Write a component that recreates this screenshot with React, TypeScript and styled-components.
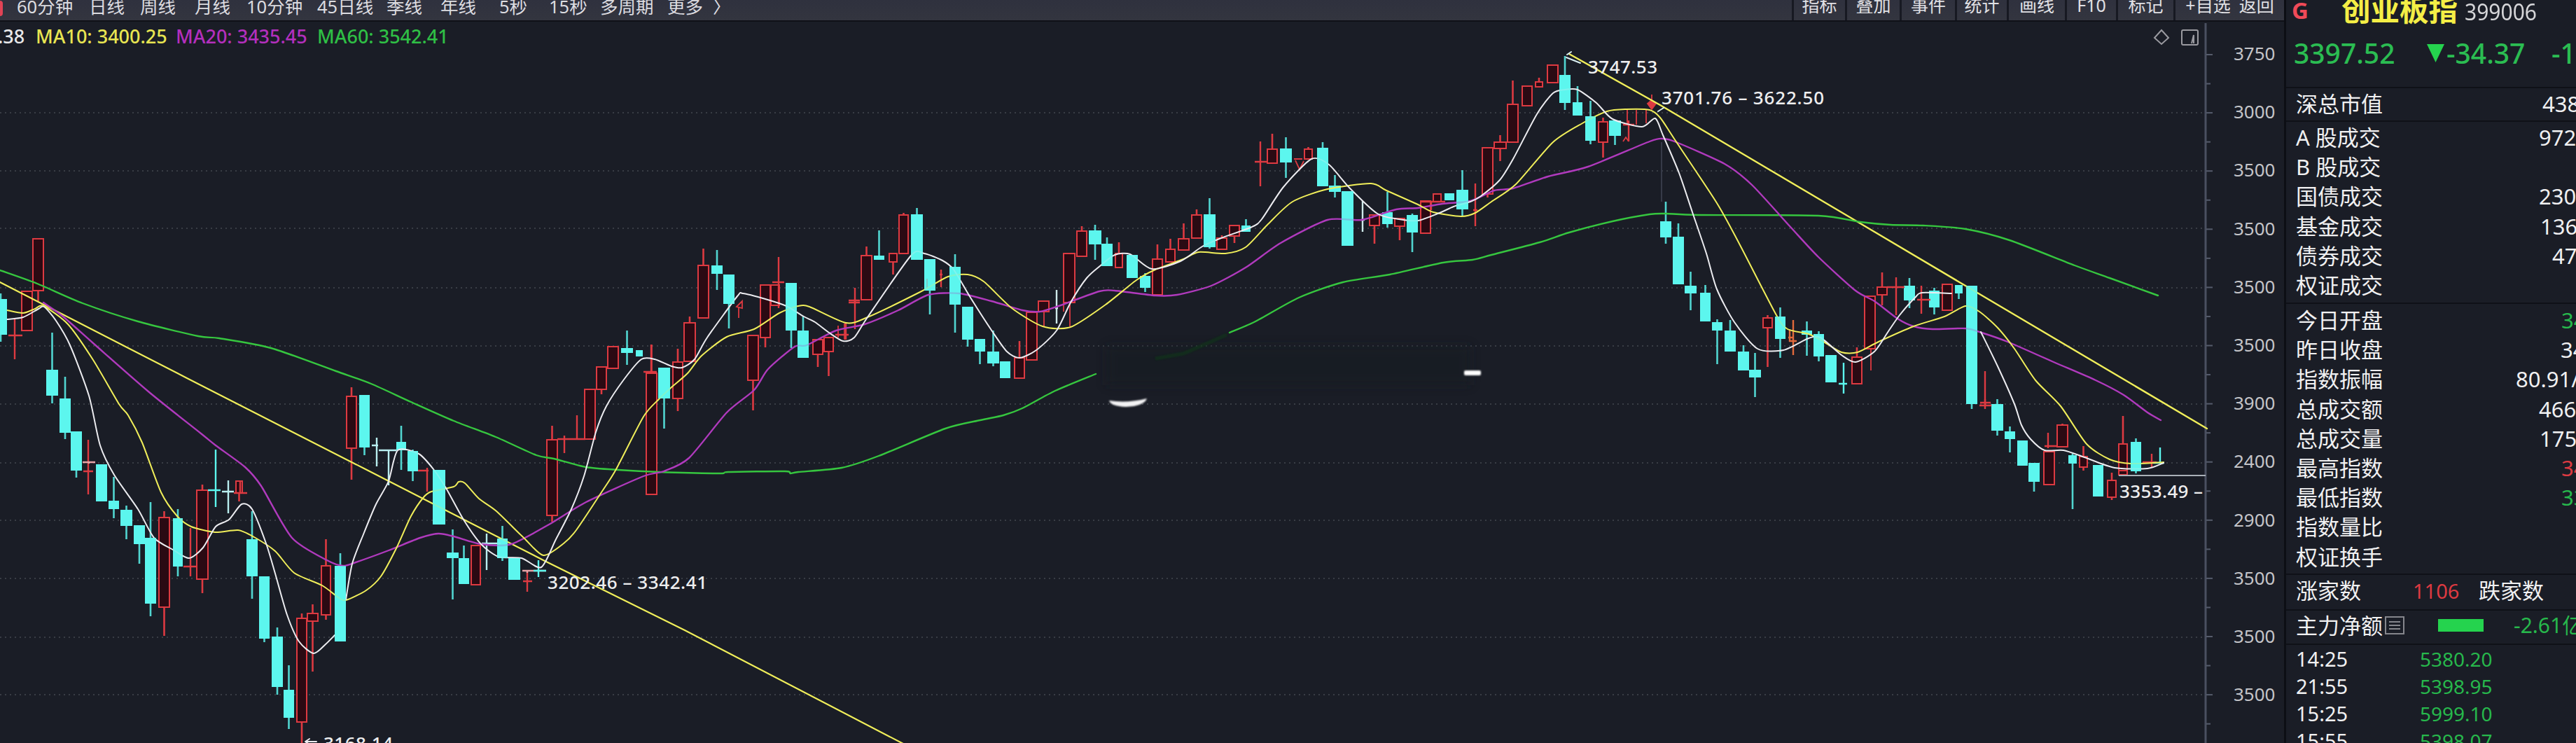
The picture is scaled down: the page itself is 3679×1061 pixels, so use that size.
import React from "react";
import styled, { createGlobalStyle } from "styled-components";

const UI_FONT = `"Noto Sans", "Noto Sans CJK SC", sans-serif`;

const GREEN = "#27b84c";
const RED = "#dd3a41";
const CYAN = "#5cf6ee";
const YELLOW = "#f0ee5a";

const Global = createGlobalStyle`
  html, body { margin: 0; padding: 0; background: #1a1d26; }
  * { box-sizing: border-box; }
`;

const Page = styled.div`
  display: flex;
  width: 3679px;
  height: 1061px;
  overflow: hidden;
  background: #1a1d26;
  color: #f0f0f1;
  font-family: ${UI_FONT};
  white-space: nowrap;
`;

const Main = styled.main`
  flex: none;
  width: 3262px;
  height: 1061px;
  display: flex;
  flex-direction: column;
`;

const Toolbar = styled.header`
  height: 31px;
  display: flex;
  justify-content: space-between;
  overflow: hidden;
  background: linear-gradient(#2f313e, #33353f);
  border-bottom: 2px solid #0f1118;
`;

const Periods = styled.nav`
  display: grid;
  grid-template-columns: 10px 14px 103px 73px 78px 74px 101px 99px 77px 84px 71px 73px 96px 65px 40px;
  align-items: center;
`;

const ActiveDot = styled.span`
  width: 4px;
  height: 22px;
  margin-top: -6px;
  border-radius: 0 8px 8px 0;
  background: #e04355;
`;

const Period = styled.span`
  color: #dcdce0;
  font-size: 25.500px;
  line-height: 30px;
  height: 30px;
  margin-top: -12px;
`;

const Tools = styled.div`
  display: grid;
  grid-template-columns: 76px 78px 79px 74px 83px 73px 82px 158px;
`;

const Tool = styled.div`
  display: flex;
  justify-content: center;
  gap: 12px;
  height: 36px;
  margin-top: -7px;
  border-left: 3px solid #171922;
  color: #e0e0e4;
  font-size: 25px;
  line-height: 29px;
`;

const Body = styled.section`
  position: relative;
  flex: 1;
  display: flex;
`;

const Chart = styled.svg`
  display: block;
  width: 3166px;
  height: 1030px;
  flex: none;
`;

const Legend = styled.div`
  position: absolute;
  left: -3px;
  top: 1px;
  display: flex;
  font-size: 27px;
  font-weight: 500;
  line-height: 40px;
`;

const LegendItem = styled.span<{ $color: string; $width: number }>`
  flex: none;
  color: ${(p) => p.$color};
  width: ${(p) => p.$width}px;
`;

const Scale = styled.aside`
  flex: 1;
  display: flex;
  flex-direction: column;
  padding: 4px 0 0 24px;
`;

const ScaleLabel = styled.span`
  flex: none;
  height: 83.2px;
  color: #c4c4c8;
  font-size: 26px;
  line-height: 83.2px;
`;

const ScaleInner = styled.div`
  display: flex;
  flex-direction: column;
  height: 1000px;
`;

const Sidebar = styled.aside`
  flex: none;
  width: 417px;
  height: 1061px;
  border-left: 3px solid #0c0e14;
  overflow: hidden;
`;

const Title = styled.div`
  display: flex;
  height: 36px;
  padding-left: 8px;
  align-items: center;
`;

const Badge = styled.span`
  flex: none;
  width: 71px;
  color: #ef4a58;
  font-size: 33px;
  font-weight: 700;
  line-height: 30px;
  margin-top: -7px;
`;

const Name = styled.span`
  flex: none;
  width: 176px;
  color: #f4ee46;
  font-family: "Noto Sans CJK SC", sans-serif;
  font-size: 41.500px;
  font-weight: 700;
  line-height: 40px;
  margin-top: -12px;
`;

const Code = styled.span`
  color: #d5d5d8;
  font-size: 30px;
  line-height: 30px;
  margin-top: -2px;
  transform: scaleY(1.1);
`;

const Quote = styled.div`
  display: flex;
  align-items: center;
  height: 88px;
  padding: 0 0 9px 11px;
  color: #2bbd52;
  font-size: 39px;
  font-weight: 500;
`;

const Price = styled.span`
  flex: none;
  width: 190px;
`;

const DownMark = styled.svg`
  flex: none;
  width: 25px;
  height: 26px;
  margin-right: 3px;
`;

const Change = styled.span`
  flex: none;
  width: 150px;
`;

const Group = styled.div<{ $h: number; $pad: number }>`
  height: ${(p) => p.$h}px;
  padding-top: ${(p) => p.$pad}px;
  border-top: 2px solid #0f1117;
`;

const Row = styled.div<{ $h: number }>`
  display: flex;
  align-items: center;
  height: ${(p) => p.$h}px;
  padding-left: 14px;
  font-size: 31px;
  line-height: 42px;
`;

const Label = styled.span<{ $w: number }>`
  flex: none;
  width: ${(p) => p.$w}px;
`;

const Value = styled.span<{ $color?: string; $size?: number }>`
  flex: none;
  color: ${(p) => p.$color || "inherit"};
  font-size: ${(p) => p.$size || 31}px;
`;

const Flow = styled.span`
  flex: none;
  width: 65px;
  height: 18px;
  margin: 0 43px 0 48px;
  background: #25d34e;
`;

const ListIcon = styled.svg`
  width: 28px;
  height: 26px;
  flex: none;
`;

/* up: hollow red, down: solid cyan — [kind, x1, x2, top, bottom, high, low] */
type Candle = [string, number, number, number, number, number, number];

const candles: Candle[] = [
  ["d", -8, 10, 427, 478, 419, 488],
  ["u", 31, 46, 416, 472, 416, 472],
  ["u", 47, 62, 341, 415, 341, 430],
  ["d", 66, 83, 528, 565, 475, 576],
  ["d", 85, 101, 569, 618, 538, 627],
  ["d", 101, 117, 616, 672, 616, 682],
  ["d", 137, 153, 663, 716, 663, 716],
  ["d", 155, 170, 715, 727, 681, 740],
  ["d", 172, 189, 728, 751, 722, 770],
  ["d", 191, 207, 750, 777, 750, 805],
  ["d", 207, 223, 768, 862, 717, 880],
  ["u", 227, 242, 739, 867, 730, 908],
  ["d", 247, 261, 740, 809, 727, 823],
  ["u", 281, 297, 700, 827, 692, 847],
  ["u", 337, 346, 687, 704, 687, 716],
  ["d", 352, 368, 770, 823, 730, 855],
  ["d", 370, 385, 823, 912, 823, 917],
  ["d", 388, 404, 909, 981, 896, 992],
  ["d", 405, 420, 985, 1025, 950, 1041],
  ["u", 424, 438, 883, 1031, 876, 1061],
  ["u", 439, 454, 876, 887, 863, 959],
  ["u", 459, 472, 808, 878, 770, 885],
  ["d", 478, 494, 808, 916, 790, 916],
  ["u", 495, 509, 566, 640, 553, 685],
  ["d", 513, 528, 564, 639, 564, 650],
  ["d", 566, 580, 631, 643, 608, 671],
  ["d", 582, 597, 644, 673, 642, 687],
  ["d", 618, 636, 671, 749, 671, 749],
  ["d", 638, 655, 789, 797, 756, 856],
  ["d", 655, 670, 797, 834, 779, 834],
  ["u", 673, 686, 779, 835, 779, 835],
  ["d", 710, 725, 769, 797, 751, 801],
  ["d", 726, 743, 797, 828, 797, 828],
  ["u", 781, 796, 628, 736, 608, 745],
  ["u", 835, 850, 556, 627, 556, 627],
  ["u", 852, 866, 524, 556, 524, 563],
  ["u", 868, 883, 495, 526, 495, 526],
  ["d", 887, 904, 497, 504, 472, 521],
  ["d", 908, 918, 500, 509, 500, 509],
  ["u", 923, 938, 533, 706, 492, 706],
  ["d", 940, 957, 525, 569, 525, 612],
  ["u", 961, 975, 517, 569, 498, 587],
  ["u", 977, 993, 461, 516, 452, 516],
  ["u", 997, 1012, 379, 454, 355, 454],
  ["d", 1016, 1032, 379, 391, 357, 414],
  ["d", 1033, 1049, 392, 434, 392, 469],
  ["u", 1068, 1083, 479, 543, 479, 586],
  ["u", 1086, 1100, 407, 482, 407, 496],
  ["u", 1101, 1113, 407, 436, 407, 436],
  ["d", 1122, 1138, 404, 472, 404, 497],
  ["d", 1139, 1155, 472, 511, 452, 511],
  ["u", 1161, 1175, 485, 506, 485, 524],
  ["u", 1177, 1190, 482, 502, 482, 537],
  ["u", 1230, 1245, 365, 428, 352, 428],
  ["d", 1248, 1263, 365, 371, 329, 371],
  ["u", 1270, 1281, 362, 374, 362, 392],
  ["u", 1284, 1297, 307, 362, 304, 362],
  ["d", 1301, 1318, 306, 371, 297, 371],
  ["d", 1320, 1336, 370, 415, 370, 449],
  ["d", 1356, 1372, 381, 435, 363, 475],
  ["d", 1374, 1390, 438, 485, 438, 495],
  ["d", 1392, 1407, 484, 502, 484, 520],
  ["d", 1410, 1427, 502, 519, 472, 523],
  ["d", 1428, 1443, 516, 540, 516, 540],
  ["u", 1449, 1463, 511, 540, 487, 540],
  ["u", 1466, 1481, 446, 514, 446, 514],
  ["u", 1483, 1498, 430, 445, 430, 445],
  ["u", 1519, 1535, 362, 432, 362, 432],
  ["u", 1538, 1552, 330, 366, 323, 366],
  ["d", 1555, 1573, 329, 349, 321, 371],
  ["d", 1573, 1589, 348, 380, 339, 380],
  ["u", 1593, 1603, 362, 382, 346, 382],
  ["d", 1609, 1625, 364, 397, 364, 397],
  ["d", 1628, 1643, 394, 411, 390, 417],
  ["u", 1646, 1660, 370, 421, 349, 421],
  ["u", 1665, 1678, 356, 374, 341, 374],
  ["u", 1683, 1698, 341, 357, 319, 357],
  ["u", 1702, 1716, 307, 340, 299, 340],
  ["d", 1719, 1736, 306, 353, 283, 355],
  ["u", 1738, 1752, 340, 356, 336, 356],
  ["u", 1756, 1770, 322, 337, 322, 347],
  ["d", 1773, 1786, 322, 331, 313, 331],
  ["u", 1810, 1824, 213, 233, 191, 233],
  ["d", 1828, 1845, 212, 232, 196, 254],
  ["u", 1863, 1874, 213, 227, 210, 227],
  ["d", 1881, 1897, 211, 266, 203, 266],
  ["d", 1898, 1915, 265, 274, 250, 282],
  ["d", 1916, 1933, 273, 351, 273, 351],
  ["u", 1956, 1970, 307, 322, 307, 348],
  ["d", 1974, 1989, 303, 320, 274, 325],
  ["u", 1992, 2006, 312, 323, 312, 343],
  ["d", 2009, 2025, 307, 332, 305, 360],
  ["u", 2029, 2043, 287, 333, 287, 333],
  ["u", 2047, 2058, 277, 288, 277, 288],
  ["d", 2063, 2077, 276, 286, 276, 286],
  ["d", 2080, 2097, 271, 299, 243, 309],
  ["u", 2117, 2132, 211, 277, 211, 282],
  ["u", 2134, 2151, 203, 212, 193, 230],
  ["u", 2153, 2168, 149, 203, 115, 203],
  ["u", 2174, 2188, 123, 151, 123, 151],
  ["u", 2193, 2203, 117, 124, 111, 124],
  ["u", 2210, 2225, 93, 118, 93, 118],
  ["d", 2227, 2243, 107, 147, 80, 157],
  ["d", 2246, 2260, 146, 165, 123, 165],
  ["d", 2264, 2279, 166, 201, 144, 206],
  ["u", 2283, 2296, 174, 203, 168, 225],
  ["d", 2298, 2315, 172, 194, 172, 207],
  ["d", 2371, 2387, 316, 339, 288, 348],
  ["d", 2389, 2405, 338, 406, 319, 406],
  ["d", 2406, 2423, 408, 419, 388, 443],
  ["d", 2428, 2443, 418, 459, 407, 459],
  ["d", 2445, 2460, 460, 472, 456, 520],
  ["d", 2463, 2479, 472, 502, 457, 502],
  ["d", 2482, 2498, 502, 529, 493, 529],
  ["d", 2498, 2515, 528, 539, 504, 567],
  ["u", 2518, 2531, 454, 468, 450, 524],
  ["d", 2535, 2550, 452, 484, 439, 511],
  ["d", 2573, 2588, 472, 478, 459, 508],
  ["d", 2590, 2605, 477, 509, 473, 516],
  ["d", 2607, 2623, 507, 546, 507, 546],
  ["u", 2645, 2659, 510, 548, 496, 548],
  ["u", 2663, 2678, 423, 498, 423, 498],
  ["u", 2681, 2695, 410, 421, 389, 436],
  ["d", 2719, 2735, 408, 429, 397, 440],
  ["d", 2755, 2770, 415, 439, 411, 449],
  ["u", 2774, 2788, 406, 443, 406, 443],
  ["d", 2792, 2803, 407, 419, 407, 427],
  ["d", 2808, 2824, 408, 577, 408, 584],
  ["d", 2844, 2861, 577, 615, 570, 622],
  ["d", 2863, 2878, 616, 627, 609, 646],
  ["d", 2881, 2896, 629, 665, 629, 665],
  ["d", 2897, 2913, 661, 688, 661, 702],
  ["u", 2919, 2934, 645, 692, 645, 692],
  ["u", 2938, 2953, 607, 638, 605, 638],
  ["d", 2954, 2966, 650, 662, 648, 727],
  ["u", 2970, 2981, 652, 667, 637, 672],
  ["d", 2989, 3004, 664, 709, 664, 709],
  ["u", 3010, 3022, 686, 710, 675, 714],
  ["u", 3026, 3038, 634, 678, 594, 680],
  ["d", 3043, 3058, 631, 673, 626, 676],
];

/* doji bars — [colour, centre, high, low, bar y, bar x1, bar x2] */
type Doji = [string, number, number, number, number, number, number];

const dojis: Doji[] = [
  [RED, 21, 455, 513, 479, 12, 32],
  [RED, 126, 628, 706, 673, 119, 133],
  ["#e7a3a6", 127, 659, 662, 660, 118, 136],
  [RED, 272, 754, 823, 809, 262, 281],
  [CYAN, 308, 642, 724, 700, 297, 315],
  ["#b9eef0", 326, 686, 733, 702, 317, 334],
  [RED, 343, 688, 704, 704, 334, 353],
  ["#b9eef0", 538, 625, 666, 636, 531, 540],
  ["#b9eef0", 555, 643, 693, 643, 541, 566],
  [RED, 610, 668, 702, 672, 597, 612],
  ["#b9eef0", 695, 762, 814, 776, 688, 715],
  [RED, 753, 815, 845, 830, 747, 760],
  ["#e7a3a6", 753, 814, 818, 815, 746, 780],
  [CYAN, 769, 800, 824, 815, 762, 780],
  [RED, 806, 622, 647, 627, 796, 818],
  [RED, 824, 593, 627, 627, 818, 836],
  [RED, 930, 492, 532, 531, 919, 938],
  [RED, 1112, 367, 440, 403, 1103, 1120],
  [RED, 1221, 411, 470, 429, 1212, 1228],
  [RED, 1221, 427, 434, 432, 1212, 1228],
  [RED, 1208, 460, 485, 478, 1193, 1212],
  [RED, 1344, 385, 410, 392, 1342, 1346],
  ["#cfe9ea", 1509, 414, 462, 440, 1507, 1511],
  [RED, 1800, 202, 266, 231, 1792, 1809],
  ["#cfe9ea", 1946, 287, 331, 314, 1944, 1949],
  [RED, 2044, 288, 300, 288, 2029, 2064],
  [RED, 2107, 262, 323, 300, 2104, 2110],
  [RED, 2326, 172, 202, 178, 2318, 2334],
  ["#e26a3b", 2561, 457, 507, 487, 2555, 2566],
  ["#e26a3b", 2556, 470, 488, 482, 2554, 2560],
  [CYAN, 2633, 518, 562, 548, 2626, 2638],
  [RED, 2708, 396, 450, 410, 2695, 2720],
  [RED, 2744, 408, 448, 428, 2738, 2757],
  [RED, 2835, 530, 584, 579, 2827, 2845],
  [RED, 2835, 570, 580, 575, 2828, 2843],
  [RED, 2925, 618, 640, 637, 2920, 2937],
  [RED, 3073, 648, 668, 660, 3060, 3080],
  [CYAN, 3085, 639, 661, 661, 3075, 3091],
];

type Pt = [number, number];

const green1: Pt[] = [[0, 386], [53, 405], [118, 433], [197, 459], [283, 480], [313, 483], [387, 497], [480, 530], [530, 548], [587, 574], [648, 601], [708, 624], [766, 650], [791, 655], [837, 667], [883, 671], [941, 674], [1028, 676], [1040, 674], [1121, 673], [1129, 676], [1140, 674], [1202, 668], [1255, 651], [1350, 612], [1400, 600], [1433, 593], [1460, 583], [1507, 558], [1565, 534]];
const green2: Pt[] = [[1756, 475], [1793, 459], [1855, 425], [1918, 403], [1985, 392], [2061, 375], [2103, 371], [2130, 364], [2199, 346], [2241, 332], [2303, 316], [2356, 306], [2379, 305], [2425, 307], [2597, 308], [2657, 317], [2700, 321], [2747, 322], [2807, 327], [2870, 343], [2963, 379], [3013, 397], [3082, 422]];
const purple: Pt[] = [[62, 432], [90, 452], [133, 490], [213, 560], [287, 619], [308, 636], [350, 667], [373, 694], [417, 768], [467, 800], [490, 808], [508, 803], [555, 786], [600, 768], [626, 762], [648, 766], [687, 777], [730, 777], [784, 749], [837, 717], [919, 680], [948, 673], [984, 654], [1038, 589], [1077, 557], [1097, 527], [1135, 495], [1152, 493], [1194, 472], [1235, 463], [1283, 443], [1326, 421], [1370, 419], [1416, 430], [1460, 443], [1485, 445], [1512, 437], [1570, 416], [1592, 415], [1650, 422], [1681, 421], [1730, 408], [1779, 382], [1829, 347], [1896, 314], [1945, 314], [1994, 299], [2025, 297], [2060, 291], [2100, 287], [2134, 272], [2161, 269], [2211, 252], [2268, 238], [2356, 202], [2375, 198], [2394, 203], [2463, 234], [2502, 264], [2557, 324], [2597, 367], [2650, 415], [2677, 430], [2710, 455], [2733, 466], [2760, 470], [2807, 469], [2830, 475], [2867, 488], [2933, 517], [2993, 543], [3033, 564], [3067, 589], [3086, 600]];
const yellow1: Pt[] = [[10, 443], [33, 447], [50, 441], [62, 437], [97, 463], [133, 514], [170, 577], [183, 593], [203, 632], [230, 703], [253, 737], [273, 752], [307, 760], [340, 757], [363, 767], [393, 787], [420, 818], [460, 836], [483, 853], [494, 857], [523, 843], [544, 823], [566, 783], [587, 737], [605, 710], [616, 702], [648, 695], [655, 688], [664, 690], [684, 712], [709, 730], [748, 768], [776, 793], [805, 776], [823, 757], [859, 703], [880, 670], [919, 595], [941, 570], [959, 553], [982, 533], [1002, 508], [1038, 481], [1077, 470], [1113, 447], [1140, 437], [1156, 438], [1208, 461], [1239, 453], [1314, 417], [1354, 395], [1382, 392], [1405, 402], [1445, 440], [1489, 466], [1529, 467], [1579, 435], [1623, 400], [1650, 385], [1690, 370], [1712, 360], [1750, 362], [1779, 353], [1811, 320], [1846, 288], [1896, 270], [1958, 262], [1980, 272], [2025, 292], [2047, 303], [2087, 309], [2107, 304], [2130, 288], [2165, 263], [2218, 203], [2260, 176], [2295, 159], [2322, 156], [2356, 157], [2371, 168], [2391, 198], [2452, 290], [2484, 348], [2537, 450], [2553, 470], [2583, 477], [2603, 487], [2630, 503], [2653, 503], [2683, 488], [2733, 466], [2777, 452], [2807, 437], [2827, 445], [2853, 468], [2877, 498], [2907, 543], [2943, 580], [2980, 634], [3013, 656], [3043, 662], [3090, 660]];
const white: Pt[] = [[10, 456], [33, 453], [55, 441], [63, 438], [80, 458], [100, 493], [127, 565], [143, 636], [163, 678], [197, 727], [220, 768], [247, 785], [270, 797], [290, 782], [308, 752], [327, 742], [345, 720], [360, 727], [380, 776], [393, 819], [410, 878], [427, 916], [448, 933], [465, 920], [478, 907]];
const white2: Pt[] = [[494, 856], [503, 805], [519, 763], [537, 720], [555, 687], [568, 643], [598, 648], [619, 670], [637, 697], [662, 742], [687, 777], [712, 795], [745, 797], [773, 810], [794, 770], [816, 727], [834, 680], [851, 617], [866, 580], [891, 542], [916, 513], [935, 513], [959, 523], [974, 525], [992, 513], [1010, 482], [1053, 423], [1061, 419], [1093, 427], [1123, 437], [1148, 452], [1164, 460], [1184, 475], [1204, 487], [1220, 482], [1239, 453], [1301, 365], [1320, 362], [1346, 372], [1362, 385], [1386, 425], [1417, 473], [1438, 502], [1456, 511], [1480, 500], [1509, 472], [1529, 432], [1552, 397], [1572, 379], [1592, 364], [1614, 363], [1645, 384], [1686, 373], [1717, 352], [1744, 340], [1788, 324], [1802, 313], [1833, 267], [1873, 227], [1898, 235], [1927, 268], [1967, 305], [1998, 313], [2025, 315], [2056, 304], [2076, 295], [2100, 288], [2115, 280], [2142, 257], [2161, 227], [2195, 163], [2218, 133], [2235, 128], [2253, 128], [2280, 147], [2303, 170], [2345, 181], [2364, 169], [2375, 193], [2398, 247], [2417, 303], [2437, 362], [2452, 413], [2477, 460], [2510, 498], [2547, 500], [2583, 483], [2600, 482], [2630, 507], [2650, 517], [2677, 502], [2697, 473], [2713, 450], [2735, 425], [2745, 418], [2787, 419]];
const white3: Pt[] = [[2829, 474], [2853, 523], [2877, 577], [2887, 607], [2900, 627], [2920, 643], [2947, 643], [2977, 653], [3020, 668], [3067, 669], [3090, 661]];

const curve = (p: Pt[]) => {
  let d = `M${p[0][0]} ${p[0][1]}`;
  for (let i = 0; i < p.length - 1; i++) {
    const a = p[Math.max(0, i - 1)];
    const b = p[i];
    const c = p[i + 1];
    const e = p[Math.min(p.length - 1, i + 2)];
    const k = 8;
    d += `C${b[0] + (c[0] - a[0]) / k} ${b[1] + (c[1] - a[1]) / k} ${c[0] - (e[0] - b[0]) / k} ${c[1] - (e[1] - b[1]) / k} ${c[0]} ${c[1]}`;
  }
  return d;
};

const gridY = [161, 244, 326, 411, 494, 577, 661, 743, 826, 910, 992];
const scale = ["3750", "3000", "3500", "3500", "3500", "3500", "3900", "2400", "2900", "3500", "3500", "3500"];

const CandleMark = ({ c }: { c: Candle }) => {
  const [kind, x1, x2, top, bottom, high, low] = c;
  const mid = (x1 + x2) / 2;
  if (kind === "d") {
    return (
      <g fill={CYAN}>
        <rect x={mid - 1.3} y={high} width={2.6} height={low - high} opacity={0.85} />
        <rect x={x1} y={top} width={x2 - x1} height={bottom - top} />
      </g>
    );
  }
  return (
    <g stroke={RED} strokeWidth={2} fill="#2b0a13">
      <path d={`M${mid} ${high}V${top}M${mid} ${bottom}V${low}`} strokeWidth={2.6} />
      <rect x={x1} y={top} width={x2 - x1} height={bottom - top} />
    </g>
  );
};

const DojiMark = ({ d }: { d: Doji }) => (
  <path d={`M${d[1]} ${d[2]}V${d[3]}M${d[5]} ${d[4]}H${d[6]}`} stroke={d[0]} strokeWidth={2.4} fill="none" />
);

const PriceChart = () => (
  <Chart viewBox="0 31 3166 1030">
    <defs>
      <filter id="soft" x="-20%" y="-50%" width="140%" height="200%">
        <feGaussianBlur stdDeviation="7" />
      </filter>
      <filter id="edge" x="-20%" y="-50%" width="140%" height="200%">
        <feGaussianBlur stdDeviation="1" />
      </filter>
    </defs>
    <g stroke="#393d45" strokeWidth={2} strokeDasharray="2 5">
      {gridY.map((y) => (
        <path key={y} d={`M0 ${y}H3150`} />
      ))}
    </g>
    <path d="M2373 203V288" stroke="#363a48" strokeWidth={2} />
    <g stroke="#555b6b" strokeWidth={2} fill="none">
      <path d="M3150 33V1061" strokeWidth={3} stroke="#4a5060" />
      {Array.from({ length: 24 }, (_, i) => (
        <path key={i} d={`M3151 ${78 + i * 41.55}h${i % 2 ? 6 : 9}`} />
      ))}
    </g>

    {candles.map((c, i) => (
      <CandleMark key={i} c={c} />
    ))}
    {dojis.map((d, i) => (
      <DojiMark key={i} d={d} />
    ))}
    <g stroke={RED} strokeWidth={1.8} fill="none">
      <path d="M1491 445V467M1528 432V466M1519 432V445M1052 438l8 -8v10zM1055 438V454" />
      <path d="M1848 227h12M1850 229l6 13l6-12M2672 498V529M2324 157V178M2337 157V178M2351 157V176M2318 202l4 -6l4 6" />
      <path d="M1197 482V465M1206 485V462M3026 672H3038M1324 412V398" />
      <path d="M2359 135V143M2353 148l6-5l6 5l-6 8z" fill={RED} />
    </g>
    <g fill="none" strokeWidth={2.4} strokeLinejoin="round" strokeLinecap="round">
      <path d="M0 403L267 540L520 669L776 800L978 900L1290 1062" stroke={YELLOW} strokeWidth={2.2} />
      <path d="M2241 77L2371 150L2650 315L2807 408L3152 612" stroke={YELLOW} />
      <path d={curve(green1)} stroke="#36c63f" />
      <path d={curve(green2)} stroke="#36c63f" />
      <path d={curve(purple)} stroke="#b03abd" />
      <path d={curve(yellow1)} stroke={YELLOW} strokeWidth={2} />
      <path d={curve(white)} stroke="#ececf0" strokeWidth={2} />
      <path d={curve(white2)} stroke="#ececf0" strokeWidth={2} />
      <path d={curve(white3)} stroke="#ececf0" strokeWidth={2} />
      <path d="M2237 82l20 8M2238 78l6-4M2368 159l8-5" stroke="#d9eef0" strokeWidth={2} />
      <path d="M436 1059h16M436 1059l6-4M436 1059l6 4" stroke="#ececf0" strokeWidth={2} />
    </g>
    {candles
      .filter((c) => c[0] === "d" && c[4] - c[3] > 24)
      .map((c, i) => (
        <rect key={i} x={c[1]} y={c[3]} width={c[2] - c[1]} height={c[4] - c[3]} fill={CYAN} opacity={0.75} />
      ))}
    <path d="M3026 679H3150" stroke="#aab0b8" strokeWidth={2} />

    <rect x={1580} y={494} width={520} height={56} fill="#171a21" opacity={0.5} filter="url(#soft)" />
    <path d="M1650 512L1690 505L1752 478" stroke="#0b3a14" strokeWidth={5} opacity={0.55} fill="none" filter="url(#edge)" />
    <path d="M1584 572Q1610 576 1638 569Q1634 580 1608 581Q1586 580 1584 572Z" fill="#f3f3f4" filter="url(#edge)" />
    <rect x={2091} y={529} width={24} height={7} rx={2} fill="#ffffff" filter="url(#edge)" />

    <g fill="#eeeeef" fontFamily={UI_FONT} fontSize={26} fontWeight={500}>
      <text x={2268} y={105} textLength={99}>3747.53</text>
      <text x={2373} y={149} textLength={232}>3701.76 – 3622.50</text>
      <text x={782} y={841} textLength={228}>3202.46 – 3342.41</text>
      <text x={3027} y={711} textLength={119}>3353.49 –</text>
      <text x={462} y={1071} textLength={99}>3168.14</text>
    </g>
    <g fill="none" stroke="#9a9aa0" strokeWidth={2}>
      <path d="M3087 43L3097 54L3087 63L3077 54Z" />
      <rect x={3116} y={43} width={23} height={21} rx={2} />
      <path d="M3133 62V50l-3 12" />
    </g>
  </Chart>
);

const periods = ["60分钟", "日线", "周线", "月线", "10分钟", "45日线", "季线", "年线", "5秒", "15秒", "多周期", "更多", "〉"];
const tools = ["指标", "叠加", "事件", "统计", "画线", "F10", "标记"];

type Stat = [string, string, number, string?];
const turnover: Stat[] = [
  ["A 股成交", "972.5", 347],
  ["B 股成交", "0.01", 400, GREEN],
  ["国债成交", "230.1", 347],
  ["基金成交", "136.8", 349],
  ["债券成交", "47.25", 366],
  ["权证成交", "", 347],
];
const quotes: Stat[] = [
  ["今日开盘", "3418", 379, GREEN],
  ["昨日收盘", "3431", 378],
  ["指数振幅", "80.91/2", 314],
  ["总成交额", "466.1", 347],
  ["总成交量", "175.2", 348],
  ["最高指数", "3448", 379, RED],
  ["最低指数", "3367", 379, GREEN],
  ["指数量比", "", 347],
  ["权证换手", "", 347],
];
const ticks: [string, string][] = [
  ["14:25", "5380.20"],
  ["21:55", "5398.95"],
  ["15:25", "5999.10"],
  ["15:55", "5398.07"],
];

const StatRow = ({ s, h = 42.2 }: { s: Stat; h?: number }) => (
  <Row $h={h}>
    <Label $w={s[2]}>{s[0]}</Label>
    <Value $color={s[3]}>{s[1]}</Value>
  </Row>
);

export default function App() {
  return (
    <>
      <Global />
      <Page>
        <Main>
          <Toolbar>
            <Periods>
              <ActiveDot />
              <span />
              {periods.map((p) => (
                <Period key={p}>{p}</Period>
              ))}
            </Periods>
            <Tools>
              {tools.map((t) => (
                <Tool key={t}>{t}</Tool>
              ))}
              <Tool>
                <span>+自选</span>
                <span>返回</span>
              </Tool>
            </Tools>
          </Toolbar>
          <Body>
            <PriceChart />
            <Legend>
              <LegendItem $color="#e8e8ea" $width={54}>.38</LegendItem>
              <LegendItem $color="#e8e552" $width={200}>MA10: 3400.25</LegendItem>
              <LegendItem $color="#b32fbd" $width={202}>MA20: 3435.45</LegendItem>
              <LegendItem $color="#2fbf45" $width={200}>MA60: 3542.41</LegendItem>
            </Legend>
            <Scale>
              <ScaleInner>
                {scale.map((v, i) => (
                  <ScaleLabel key={i}>{v}</ScaleLabel>
                ))}
              </ScaleInner>
            </Scale>
          </Body>
        </Main>

        <Sidebar>
          <Title>
            <Badge>G</Badge>
            <Name>创业板指</Name>
            <Code>399006</Code>
          </Title>
          <Quote>
            <Price>3397.52</Price>
            <DownMark viewBox="0 0 25 26">
              <path d="M0 0H25L12.500 26Z" fill="#25d34e" />
            </DownMark>
            <Change>-34.37</Change>
            <span>-1.00%</span>
          </Quote>
          <Group $h={48} $pad={1}>
            <StatRow s={["深总市值", "438.2", 352]} />
          </Group>
          <Group $h={260} $pad={1}>
            {turnover.map((s) => (
              <StatRow key={s[0]} s={s} />
            ))}
          </Group>
          <Group $h={387} $pad={2}>
            {quotes.map((s) => (
              <StatRow key={s[0]} s={s} />
            ))}
          </Group>
          <Group $h={51} $pad={1}>
            <Row $h={42}>
              <Label $w={167}>涨家数</Label>
              <Label $w={94}>
                <Value $color={RED} $size={29}>1106</Value>
              </Label>
              <Value>跌家数</Value>
            </Row>
          </Group>
          <Group $h={49} $pad={0}>
            <Row $h={42}>
              <Label $w={127}>主力净额</Label>
              <ListIcon viewBox="0 0 28 26">
                <path d="M1 1H27V25H1ZM6 8H22M6 13H22M6 18H22" fill="none" stroke="#85868c" strokeWidth="2" />
              </ListIcon>
              <Flow />
              <Value $color={GREEN} $size={30}>-2.61亿</Value>
            </Row>
          </Group>
          <Group $h={160} $pad={0}>
            {ticks.map((t) => (
              <Row key={t[0]} $h={39}>
                <Label $w={177}>
                  <Value $size={29}>{t[0]}</Value>
                </Label>
                <Value $color={GREEN} $size={28}>{t[1]}</Value>
              </Row>
            ))}
          </Group>
        </Sidebar>
      </Page>
    </>
  );
}
